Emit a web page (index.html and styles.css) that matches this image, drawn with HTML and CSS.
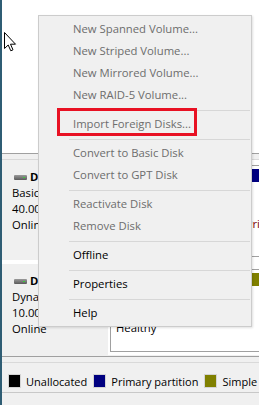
FILE: index.html
```html
<!doctype html>
<html>
<head>
<meta charset="utf-8">
<title>Disk Management</title>
<link rel="stylesheet" href="styles.css">
</head>
<body>
	<div class="win">
		<div class="top"></div>
		<div class="split"></div>
		<div class="disks">
			<div class="disk disk1">
				<div class="info">
					<div class="dname"><span class="dicon"></span><b>Disk 0</b></div>
					<div>Basic</div>
					<div>40.00 GB</div>
					<div>Online</div>
				</div>
				<div class="vol">
					<div class="bar bar-pri"></div>
					<div class="vtxt">
						<div>(C:)</div>
						<div>40.00 GB NTFS</div>
						<div class="warn">Healthy (Boot, Page File, Primary Partition)</div>
					</div>
				</div>
			</div>
			<div class="disk disk2">
				<div class="info">
					<div class="dname"><span class="dicon"></span><b>Disk 1</b></div>
					<div>Dynamic</div>
					<div>10.00 GB</div>
					<div>Online</div>
				</div>
				<div class="vol">
					<div class="bar bar-simple"></div>
					<div class="vtxt">
						<div>New Volume (E:)</div>
						<div>10.00 GB NTFS</div>
						<div>Healthy</div>
					</div>
				</div>
			</div>
		</div>
		<div class="split split2"></div>
		<div class="legend">
			<span class="sw sw-un"></span><span>Unallocated</span>
			<span class="sw sw-pri"></span><span>Primary partition</span>
			<span class="sw sw-simple"></span><span>Simple volume</span>
		</div>
		<div class="status"></div>
	</div>

	<svg class="cursor" width="13" height="20" viewBox="0 0 13 20">
		<path d="M0.5 0.5 L0.5 16.5 L4.2 13 L6.8 18.8 L9 17.8 L6.5 12.2 L11.5 12.2 Z" fill="#fff" stroke="#000" stroke-width="1" stroke-linejoin="miter"/>
	</svg>

	<div class="menu">
		<div class="item off">New Spanned Volume...</div>
		<div class="item off">New Striped Volume...</div>
		<div class="item off">New Mirrored Volume...</div>
		<div class="item off">New RAID-5 Volume...</div>
		<div class="sep"></div>
		<div class="item off">Import Foreign Disks...</div>
		<div class="sep"></div>
		<div class="item off">Convert to Basic Disk</div>
		<div class="item off">Convert to GPT Disk</div>
		<div class="sep"></div>
		<div class="item off">Reactivate Disk</div>
		<div class="item off">Remove Disk</div>
		<div class="sep"></div>
		<div class="item">Offline</div>
		<div class="sep"></div>
		<div class="item">Properties</div>
		<div class="sep"></div>
		<div class="item">Help</div>
	</div>
	<div class="mark"></div>
</body>
</html>
```

FILE: styles.css
```css
body{ margin:0; width:259px; height:405px; overflow:hidden; position:relative; font-family:"Open Sans","Noto Sans",sans-serif; font-size:11.3px; color:#000; background:#fff;}
.win{ height:405px; border-left:2px solid #2f5d74; display:flex; flex-direction:column; background:#f0f0f0;}
.top{ height:153px; background:#fff; flex:none;}
.split{ height:5px; flex:none; border-top:1px solid #a0a0a0; border-bottom:1px solid #d9d9d9; background:#f0f0f0;}
.disks{ flex:none; height:195px; background:#fff; display:flex; flex-direction:column; gap:4px;}
.disk{ display:grid; grid-template-columns:106px 1fr; column-gap:2px; flex:none; overflow:hidden;}
.disk1{ height:100px;}
.disk2{ height:91px;}
.info{ background:#f0f0f0; padding:9px 0 0 10px; line-height:16px; white-space:nowrap; overflow:hidden;}
.dname{ display:flex; align-items:center; gap:3px;}
.dname b{ font-weight:700;}
.dicon{ width:13px; height:5px; background:linear-gradient(#9a9a9a,#5a5a5a); border-radius:1px; position:relative; margin-left:2px;}
.dicon::after{ content:""; position:absolute; right:2px; top:2px; width:2px; height:1px; background:#35d035;}
.vol{ margin:5px 0 3px; border:1px solid #a0a0a0; border-right:none; background:#fff; padding:3px 0 0 3px; white-space:nowrap; overflow:hidden;}
.bar{ height:13px;}
.bar-pri{ background:#000080;}
.bar-simple{ background:#808000;}
.vtxt{ padding:2px 0 0 2px; line-height:16px;}
.warn{ color:#800000;}
.split2{ margin-top:1px;}
.legend{ height:30px; box-sizing:border-box; flex:none; display:flex; align-items:flex-end; padding:0 0 4px 6px; white-space:nowrap; overflow:hidden; border-bottom:1px solid #c8c8c8; font-size:11px; line-height:13px;}
.sw{ width:11px; height:12px; border:1px solid #d4d4d4; margin-right:5px; flex:none;}
.legend span + .sw{ margin-left:6px;}
.sw-un{ background:#000;}
.sw-pri{ background:#000080;}
.sw-simple{ background:#808000;}
.status{ flex:1; background:#f0f0f0;}
.cursor{ position:absolute; left:4px; top:32px;}
.menu{ position:absolute; left:38px; top:15px; width:212px; background:#f0f0f0; border:1px solid #cccccc; padding:2px 0; box-shadow:1px 1px 2px rgba(0,0,0,0.12);}
.item{ height:22px; line-height:22px; padding-left:34px; white-space:nowrap;}
.item.off{ color:#6d6d6d;}
.sep{ height:1px; margin:4px 1px 2px 30px; background:#d7d7d7;}
.mark{ position:absolute; left:57px; top:108px; width:134px; height:22px; border:3px solid #e81123;}
```
